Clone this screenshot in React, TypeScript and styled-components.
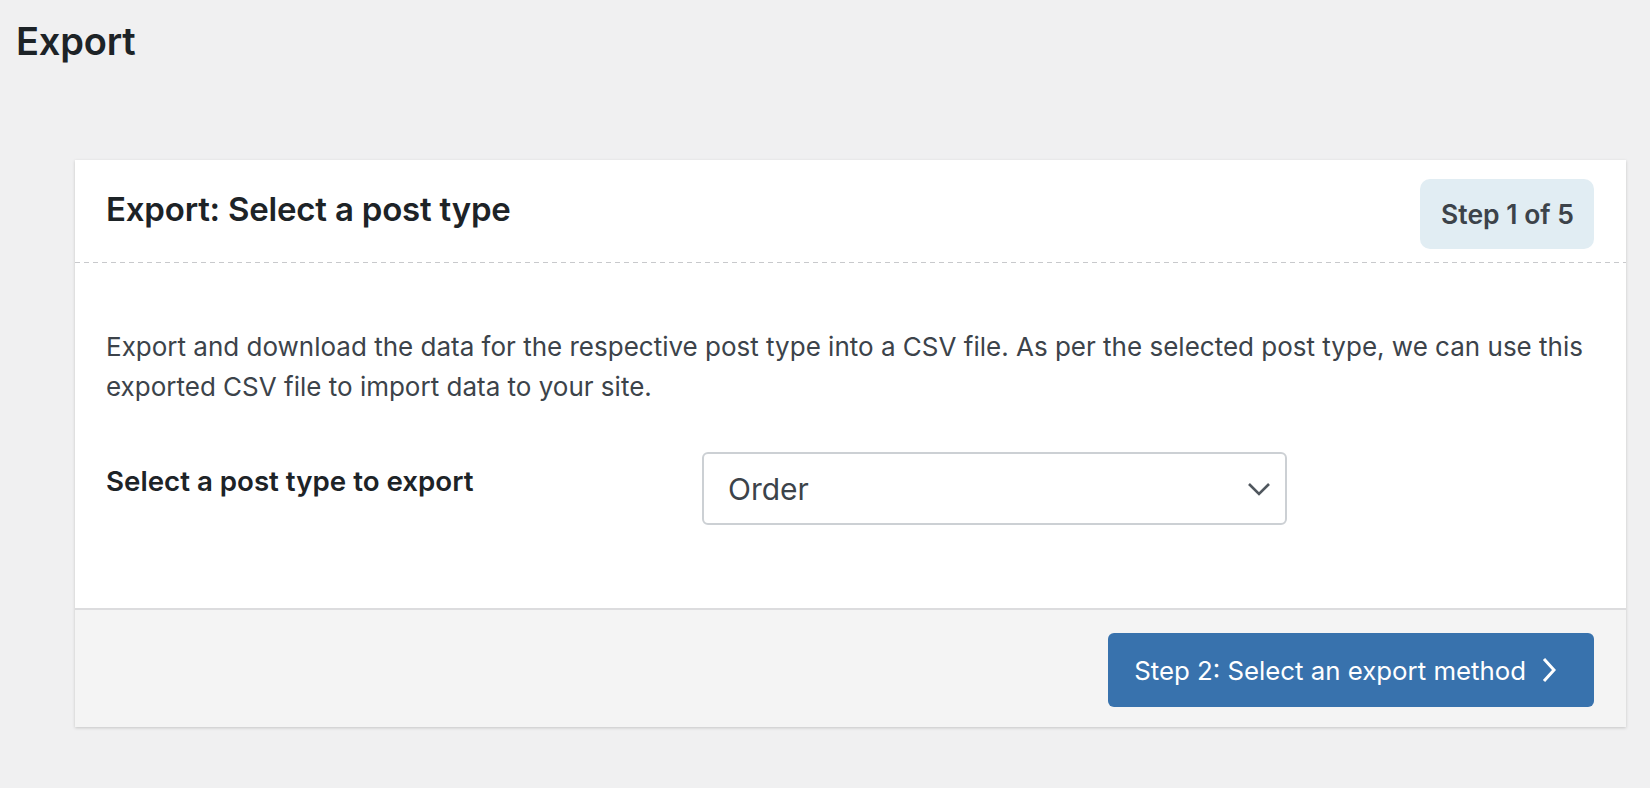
import React from "react";
import styled, { createGlobalStyle } from "styled-components";

const GlobalStyle = createGlobalStyle`
  html, body {
    margin: 0;
    padding: 0;
    background: #f0f0f1;
    font-family: Inter, "Noto Sans", sans-serif;
    color: #3c434a;
  }
`;

const Page = styled.div`
  padding: 15px 16px 40px 16px;
`;

const PageTitle = styled.h1`
  margin: 0 0 93px 0;
  font-size: 38px;
  line-height: 52px;
  font-weight: 600;
  color: #1d2327;
  letter-spacing: -0.2px;
`;

const Card = styled.div`
  margin-left: 59px;
  width: 1551px;
  background: #fff;
  box-shadow: 0 1px 3px rgba(0, 0, 0, 0.18);
`;

const CardHeader = styled.div`
  display: flex;
  align-items: center;
  justify-content: space-between;
  padding: 19px 32px 14px 31px;
  background-image: repeating-linear-gradient(
    to right,
    #c8c9cc 0 5px,
    transparent 5px 9px
  );
  background-size: 100% 1.5px;
  background-position: bottom left;
  background-repeat: no-repeat;
`;

const CardTitle = styled.h2`
  margin: 0 0 10px 0;
  font-size: 33px;
  font-weight: 600;
  color: #1d2327;
  letter-spacing: -0.2px;
`;

const StepBadge = styled.span`
  display: inline-flex;
  align-items: center;
  height: 70px;
  padding: 0 20px 0 21px;
  border-radius: 10px;
  background: #e1edf3;
  color: #3c434a;
  font-size: 26.5px;
  font-weight: 600;
`;

const CardBody = styled.div`
  padding: 64px 31px 83px 31px;
`;

const Description = styled.p`
  margin: 0;
  font-size: 26px;
  line-height: 40px;
  color: #3c434a;
`;

const FieldRow = styled.div`
  display: flex;
  align-items: flex-start;
  margin-top: 45px;
`;

const FieldLabel = styled.label`
  width: 596px;
  padding-top: 9px;
  font-size: 27.7px;
  line-height: 40px;
  font-weight: 600;
  color: #1d2327;
`;

const SelectBox = styled.div`
  position: relative;
  width: 585px;
  height: 73px;
  box-sizing: border-box;
  border: 2px solid #ccd0d4;
  border-radius: 6px;
  display: flex;
  align-items: center;
  padding: 0 24px;
  font-size: 30px;
  color: #3c434a;
`;

const Chevron = styled.svg`
  position: absolute;
  right: 14px;
  top: 50%;
  transform: translateY(-50%);
`;

const CardFooter = styled.div`
  display: flex;
  justify-content: flex-end;
  padding: 23px 32px 20px 32px;
  background: #f4f4f4;
  border-top: 2px solid #dcdcde;
`;

const NextButton = styled.button`
  display: inline-flex;
  align-items: center;
  gap: 16px;
  height: 74px;
  padding: 0 38px 0 26px;
  border: none;
  border-radius: 6px;
  background: #3872ad;
  color: #fff;
  font-family: inherit;
  font-size: 25.8px;
  cursor: pointer;
`;

const App = () => {
  return (
    <Page>
      <GlobalStyle />
      <PageTitle>Export</PageTitle>
      <Card>
        <CardHeader>
          <CardTitle>Export: Select a post type</CardTitle>
          <StepBadge>Step 1 of 5</StepBadge>
        </CardHeader>
        <CardBody>
          <Description>
            Export and download the data for the respective post type into a CSV file. As per the
            selected post type, we can use this exported CSV file to import data to your site.
          </Description>
          <FieldRow>
            <FieldLabel>Select a post type to export</FieldLabel>
            <SelectBox>
              Order
              <Chevron width="24" height="14" viewBox="0 0 24 14" fill="none">
                <path d="M2 2l10 10L22 2" stroke="#50575e" strokeWidth="2.6" />
              </Chevron>
            </SelectBox>
          </FieldRow>
        </CardBody>
        <CardFooter>
          <NextButton>
            Step 2: Select an export method
            <svg width="14" height="26" viewBox="0 0 14 26" fill="none">
              <path d="M2 2l10 11L2 24" stroke="#fff" strokeWidth="3" />
            </svg>
          </NextButton>
        </CardFooter>
      </Card>
    </Page>
  );
};

export default App;
